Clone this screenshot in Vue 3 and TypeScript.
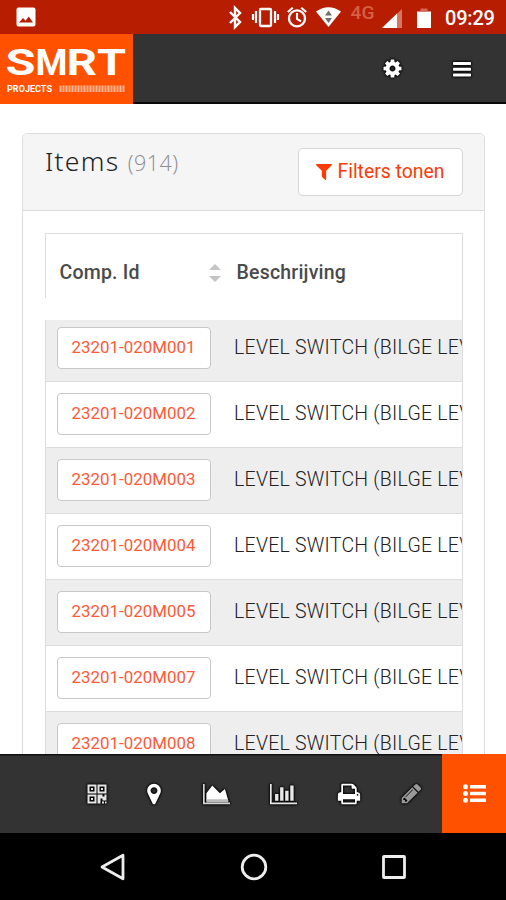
<script setup lang="ts">
interface Item {
  id: string
  description: string
}

const items: Item[] = ['001', '002', '003', '004', '005', '007', '008'].map((n) => ({
  id: `23201-020M${n}`,
  description: 'LEVEL SWITCH (BILGE LEV',
}))
const total = 914
const stripes: number[] = Array.from({ length: 22 }, (_, i) => i)
</script>

<template>
  <div class="screen">
    <div class="status">
      <svg class="photo" viewBox="0 0 20 20" width="20" height="20">
        <path fill="#fff" fill-rule="evenodd" d="M2.5.5h15a2 2 0 0 1 2 2v15a2 2 0 0 1-2 2h-15a2 2 0 0 1-2-2v-15a2 2 0 0 1 2-2zM3 15.5h14l-4.2-6-3.3 4.2-2.4-2.6z" />
      </svg>
      <svg class="phone-icons" viewBox="0 0 212 34" width="212" height="34">
        <path d="M3 12l10 10-5 5V8l5 5L3 23" fill="none" stroke="#fff" stroke-width="2.4" />
        <g fill="none" stroke="#fff">
          <rect x="33" y="9" width="11" height="17" rx="1" stroke-width="2.3" />
          <path d="M29 11v12M48 11v12M26 14v6M51 14v6" stroke-width="2.2" />
          <circle cx="70" cy="18.4" r="8" stroke-width="2.3" />
          <path d="M70 13v6l4 2.4M60.800 12l5-4.300M79.200 12l-5-4.300" stroke-width="2.1" />
        </g>
        <path d="M89 11.500Q101.500 3 114 11.500L101.500 27z" fill="#fff" />
        <path d="M98 15.500l3.500-5 3.500 5zM98 18l3.500 5 3.500-5z" fill="#766c6c" />
        <text x="123.500" y="18.500" class="network" textLength="24" lengthAdjust="spacingAndGlyphs">4G</text>
        <path d="M175 9v19h-20z" fill="#d9765f" />
        <path d="M170 13.500v14.500h-15z" fill="#fff" />
        <path d="M190 11.500h14V28h-14z" fill="#fff" />
        <path d="M193.500 8.500h7v3h-7z" fill="#d36b55" />
      </svg>
      <span class="clock">09:29</span>
    </div>

    <header class="topbar">
      <div class="logo">
        <svg viewBox="0 0 133 69" width="133" height="69">
          <g class="brand">
            <text x="5.500" y="41" textLength="30" lengthAdjust="spacingAndGlyphs">S</text>
            <text x="35.500" y="41" textLength="32" lengthAdjust="spacingAndGlyphs">M</text>
            <text x="66.500" y="41" textLength="30.500" lengthAdjust="spacingAndGlyphs">R</text>
            <text x="97" y="41" textLength="29" lengthAdjust="spacingAndGlyphs">T</text>
          </g>
          <text x="7" y="57.500" class="brand-sub" textLength="45" lengthAdjust="spacingAndGlyphs">PROJECTS</text>
          <rect v-for="s in stripes" :key="s" :x="59.500 + s * 3" y="51.500" width="2" height="6.500" fill="#ffb795" />
        </svg>
      </div>
      <div class="actions">
        <svg class="icon" viewBox="0 0 1792 1792" width="21" height="21">
          <path d="M1152 896q0-106-75-181t-181-75-181 75-75 181 75 181 181 75 181-75 75-181zm512-109v222q0 12-8 23t-20 13l-185 28q-19 54-39 91 35 50 107 138 10 12 10 25t-9 23q-27 37-99 108t-94 71q-12 0-26-9l-138-108q-44 23-91 38-16 136-29 186-7 28-36 28h-222q-14 0-24.500-8.500t-11.500-21.500l-28-184q-49-16-90-37l-141 107q-10 9-25 9-14 0-25-11-126-114-165-168-7-10-7-23 0-12 8-23 15-21 51-66.500t54-70.500q-27-50-41-99l-183-27q-13-2-21-12.500t-8-23.500v-222q0-12 8-23t19-13l186-28q14-46 39-92-40-57-107-138-10-12-10-24 0-10 9-23 26-36 98.500-107.500t94.500-71.500q13 0 26 10l138 107q44-23 91-38 16-136 29-186 7-28 36-28h222q14 0 24.500 8.500t11.500 21.500l28 184q49 16 90 37l142-107q9-9 24-9 13 0 25 10 129 119 165 170 7 8 7 22 0 12-8 23-15 21-51 66.500t-54 70.500q26 50 41 98l183 28q13 2 21 12.500t8 23.500z" />
        </svg>
        <svg class="icon" viewBox="0 0 18 16" width="18" height="16">
          <rect y="1" width="18" height="3" rx=".7" /><rect y="6.800" width="18" height="3" rx=".7" /><rect y="12.500" width="18" height="3" rx=".7" />
        </svg>
      </div>
    </header>

    <main class="content">
      <section class="panel">
        <div class="panel-head">
          <h1>Items <small>({{ total }})</small></h1>
          <button class="filter">
            <svg viewBox="192 256 1408 1408" width="16" height="16">
              <path fill="#fb3c08" d="M1595 295q17 41-14 70l-493 493v742q0 42-39 59-13 5-25 5-27 0-45-19l-256-256q-19-19-19-45v-486l-493-493q-31-29-14-70 17-39 59-39h1280q42 0 59 39z" />
            </svg>
            <span>Filters tonen</span>
          </button>
        </div>
        <div class="table">
          <div class="thead">
            <div class="th first">
              <span>Comp. Id</span>
              <svg viewBox="0 0 12 20" width="12" height="20" fill="#c4c4c4"><path d="M0 7l6-6 6 6zM0 13h12l-6 6z" /></svg>
            </div>
            <div class="th">Beschrijving</div>
          </div>
          <div v-for="item in items" :key="item.id" class="row">
            <button class="comp">{{ item.id }}</button>
            <span class="desc">{{ item.description }}</span>
          </div>
        </div>
      </section>
    </main>

    <footer class="toolbar">
      <div />
      <div>
        <svg class="icon" viewBox="0 0 20 20" width="20" height="20">
          <path fill="#e4e4e4" fill-rule="evenodd" d="M.5.5h9v9h-9zM2.500 2.500v5h5v-5zM10.500.5h9v9h-9zM12.500 2.500v5h5v-5zM.5 10.500h9v9h-9zM2.500 12.500v5h5v-5zM4 4h2v2H4zM14 4h2v2h-2zM4 14h2v2H4zM10.500 10.500h5v2h2v-2h2v6h-4v-2h-2v5h-3zM15 17.500h2v2h-2zM18 17.500h1.500v2H18z" />
        </svg>
      </div>
      <div>
        <svg class="icon" viewBox="0 0 1792 1792" width="24" height="24"><path d="M1152 640q0-106-75-181t-181-75-181 75-75 181 75 181 181 75 181-75 75-181zm256 0q0 109-33 179l-364 774q-16 33-47.500 52t-67.500 19-67.500-19-46.500-52l-365-774q-33-70-33-179 0-212 150-362t362-150 362 150 150 362z" /></svg>
      </div>
      <div>
        <svg class="icon" viewBox="0 0 2048 1792" width="27" height="24"><path d="M1664 512l256 896h-1664v-576l448-576 576 576z" /><path fill="#d4d4d4" d="M2048 1536v128h-2048v-1536h128v1408z" /><path fill="#bbb" d="M256 1300h1640l35 236h-1675z" /></svg>
      </div>
      <div>
        <svg class="icon" viewBox="0 0 2048 1792" width="27" height="24"><path fill="#e8e8e8" d="M640 896v512h-256v-512h256zm384-512v1024h-256v-1024h256zm1024 1152v128h-2048v-1536h128v1408h1920zm-640-896v768h-256v-768h256zm384-384v1152h-256v-1152h256z" /></svg>
      </div>
      <div>
        <svg class="icon" viewBox="0 0 1792 1792" width="24" height="24"><path d="M448 1536h896v-256h-896v256zm0-640h896v-384h-160q-40 0-68-28t-28-68v-160h-640v640zm1152 64q0-26-19-45t-45-19-45 19-19 45 19 45 45 19 45-19 19-45zm128 0v416q0 13-9.500 22.500t-22.500 9.500h-224v160q0 40-28 68t-68 28h-960q-40 0-68-28t-28-68v-160h-224q-13 0-22.500-9.500t-9.500-22.500v-416q0-79 56.500-135.500t135.500-56.500h64v-544q0-40 28-68t68-28h672q40 0 88 20t76 48l152 152q28 28 48 76t20 88v256h64q79 0 135.500 56.500t56.500 135.500z" /></svg>
      </div>
      <div>
        <svg class="icon dim" viewBox="0 0 1792 1792" width="23" height="23"><path d="M491 1536l91-91-235-235-91 91v107h128v128h107zm523-928q0-22-22-22-10 0-17 7l-542 542q-7 7-7 17 0 22 22 22 10 0 17-7l542-542q7-7 7-17zm-54-192l416 416-832 832h-416v-416zm683 96q0 53-37 90l-166 166-416-416 166-165q36-38 90-38 53 0 91 38l235 234q37 39 37 91z" /></svg>
      </div>
      <div class="active">
        <svg viewBox="0 0 23 19" width="23" height="19" fill="#fff">
          <circle cx="2.500" cy="2.800" r="2.500" /><circle cx="2.500" cy="9.500" r="2.500" /><circle cx="2.500" cy="16.200" r="2.500" />
          <rect x="7" y="1" width="16" height="3.600" rx=".6" /><rect x="7" y="7.700" width="16" height="3.600" rx=".6" /><rect x="7" y="14.400" width="16" height="3.600" rx=".6" />
        </svg>
      </div>
    </footer>

    <nav class="android">
      <svg viewBox="0 0 28 28" width="28" height="28"><path d="M3 14L24 2.200v23.600z" /></svg>
      <svg viewBox="0 0 28 28" width="28" height="28"><circle cx="14" cy="14" r="11.800" /></svg>
      <svg viewBox="0 0 28 28" width="28" height="28"><rect x="3.500" y="3.500" width="21" height="21" rx=".5" /></svg>
    </nav>
  </div>
</template>

<style>
body {
  margin: 0;
  background: #fff;
  overflow: hidden;
}
</style>

<style scoped>
.screen {
  display: flex;
  flex-direction: column;
  width: 506px;
  height: 900px;
  overflow: hidden;
  background: #fff;
  font-family: Roboto, "Liberation Sans", sans-serif;
}
.screen * {
  box-sizing: border-box;
}
svg {
  display: block;
  flex: none;
}
.status {
  display: flex;
  align-items: center;
  flex: none;
  height: 34px;
  padding-left: 16px;
  background: #b71d00;
}
.phone-icons {
  margin-left: 191px;
}
.network {
  font: 500 18px Roboto, sans-serif;
  fill: #d65f45;
}
.clock {
  margin-left: 6px;
  padding-top: 1px;
  color: #fff;
  font-size: 20px;
  font-weight: 500;
  line-height: 34px;
  letter-spacing: -0.2px;
  white-space: nowrap;
}
.topbar {
  display: flex;
  justify-content: space-between;
  flex: none;
  height: 70px;
  background: #333;
  border-bottom: 2px solid #080808;
}
.logo {
  width: 133px;
  height: 70px;
  background: #ff5100;
}
.brand {
  font: 700 36px Roboto, sans-serif;
  fill: #fff;
}
.brand-sub {
  font: 700 9.500px Roboto, sans-serif;
  fill: #fff;
}
.actions {
  display: flex;
  align-items: center;
  gap: 50px;
  padding: 1px 35px 0 0;
}
.icon {
  fill: #fff;
  overflow: visible;
  filter: drop-shadow(0 0 1px #000) drop-shadow(0 0 1px #000);
}
.icon.dim {
  fill: #999;
}
.content {
  flex: 1;
  min-height: 0;
  padding: 29px 21px 0 22px;
  overflow: hidden;
}
.panel {
  border: 1px solid #ddd;
  border-radius: 5px;
  height: 720px;
}
.panel-head {
  display: flex;
  justify-content: space-between;
  align-items: flex-start;
  height: 77px;
  padding: 14px 21px 0 22px;
  background: #f5f5f5;
  border-bottom: 1px solid #ddd;
  border-radius: 4px 4px 0 0;
}
h1 {
  margin: -1px 0 0;
  color: #222;
  font: 300 26.500px/28px "Noto Sans", "Open Sans", sans-serif;
  letter-spacing: 1.300px;
  white-space: nowrap;
}
small {
  color: #8c8c8c;
  font: 300 21.500px/28px "Open Sans", sans-serif;
  letter-spacing: 0.5px;
}
.filter {
  display: flex;
  align-items: center;
  justify-content: center;
  gap: 5px;
  width: 165px;
  height: 48px;
  padding: 0 0 1px;
  background: #fff;
  border: 1.500px solid #d6d6d6;
  border-radius: 5px;
  color: #fb3c08;
  font: 400 19.400px Roboto, sans-serif;
  white-space: nowrap;
}
.table {
  margin: 22px 21px 0 22px;
  height: 600px;
  border-top: 1px solid #ddd;
  border-right: 1px solid #ddd;
  overflow: hidden;
}
.thead {
  display: grid;
  grid-template-columns: 177px 1fr;
  height: 64px;
  margin-bottom: 22px;
  padding: 13px 0 0 13.500px;
  border-left: 1px solid #ddd;
  color: #4a4a4a;
  font-size: 19.500px;
  font-weight: 500;
  letter-spacing: 0.2px;
}
.th {
  display: flex;
  align-items: center;
}
.th.first {
  justify-content: space-between;
  padding-right: 16px;
}
.row {
  display: flex;
  align-items: flex-start;
  height: 66.100px;
  padding: 11px 0 0 11px;
  border-top: 1px solid #ddd;
  border-left: 1px solid #ddd;
  overflow: hidden;
}
.row:nth-child(even) {
  background: #eee;
}
.thead + .row {
  height: 61px;
  padding-top: 7px;
  border-top: 0;
}
.comp {
  flex: none;
  width: 154px;
  height: 42px;
  padding: 0 1px 2px 0;
  background: #fff;
  border: 1px solid #c8c8c8;
  border-radius: 4px;
  color: #fc5a38;
  font: 400 16.900px/38px Roboto, sans-serif;
}
.desc {
  margin-left: 23px;
  color: #222;
  font-size: 19.500px;
  font-weight: 300;
  line-height: 42px;
  letter-spacing: 0.25px;
  white-space: nowrap;
}
.toolbar {
  display: grid;
  grid-template-columns: 68px 57px 58px 66px 68px 64px 61px 64px;
  flex: none;
  height: 79px;
  background: #333;
  box-shadow: inset 0 1.500px #111;
}
.toolbar > div {
  display: flex;
  align-items: center;
  justify-content: center;
}
.toolbar > .active {
  background: #ff5100;
}
.android {
  display: flex;
  justify-content: space-between;
  align-items: center;
  flex: none;
  height: 67px;
  padding: 0 98px 0 99px;
  background: #000;
}
.android svg {
  fill: none;
  stroke: #eee;
  stroke-width: 2.800;
  stroke-linejoin: round;
}
</style>
